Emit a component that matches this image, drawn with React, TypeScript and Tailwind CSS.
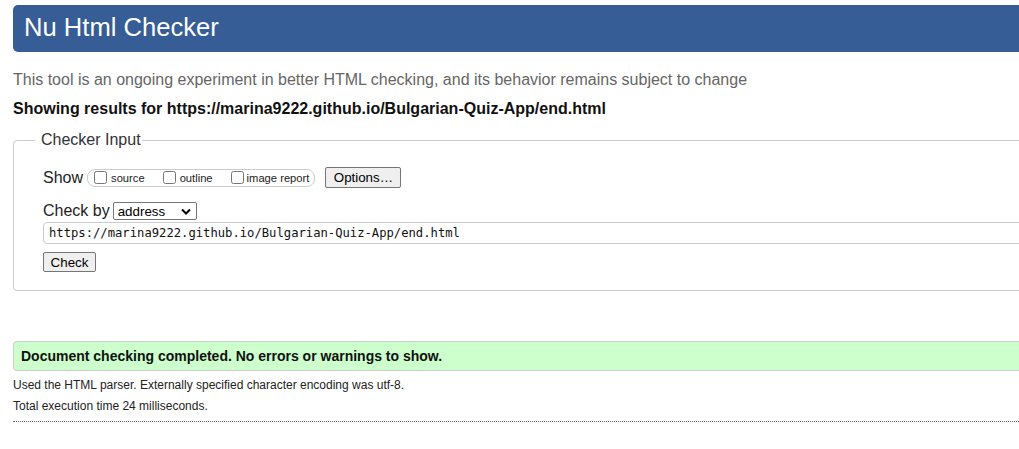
export default function App() {
  return (
    <div className="w-full overflow-hidden bg-white font-['Liberation_Sans',Arial,sans-serif] text-[#222]">
      <div className="ml-[13px] w-[1040px] pb-[28px]">
        <h1 className="mt-[5px] h-[47px] rounded-l-[5px] bg-[#365d95] pl-[11px] pt-[8px] text-[25.6px] font-normal leading-[29px] text-white">
          Nu Html Checker
        </h1>
        <p className="mt-[19px] text-[16px] leading-[18px] text-[#666]">
          This tool is an ongoing experiment in better HTML checking, and its behavior remains subject to change
        </p>
        <p className="mt-[11px] text-[16px] font-bold leading-[18px] text-[#111]">
          Showing results for https://marina9222.github.io/Bulgarian-Quiz-App/end.html
        </p>
        <fieldset className="mt-[13px] rounded-l-[4px] border border-[#ccc] pb-[18px] pl-[21px]">
          <legend className="pl-[6px] pr-[1px] text-[16px] leading-[18px] text-[#333]">Checker Input</legend>
          <div className="pl-[8px]">
            <div className="mt-[18px] flex h-[21px] items-center">
              <span className="text-[16px] leading-[18px]">Show</span>
              <div className="ml-[4px] flex h-[18px] items-center rounded-[8px] border border-[#ccc] pl-[6px] pr-[5px] text-[11.2px] leading-[13px]">
                <label className="flex items-center">
                  <input type="checkbox" className="m-0 h-[13px] w-[13px]" />
                  <span className="ml-[4px] mt-[2px]">source</span>
                </label>
                <label className="ml-[18px] flex items-center">
                  <input type="checkbox" className="m-0 h-[13px] w-[13px]" />
                  <span className="ml-[4px] mt-[2px]">outline</span>
                </label>
                <label className="ml-[18px] flex items-center">
                  <input type="checkbox" className="m-0 h-[13px] w-[13px]" />
                  <span className="ml-[3px] mt-[2px]">image report</span>
                </label>
              </div>
              <button className="ml-[10px] flex h-[21px] w-[76px] items-center justify-center rounded-[2px] border border-[#767676] bg-[#efefef] text-[13.33px] leading-[15px] text-black">
                Options…
              </button>
            </div>
            <div className="mt-[14px] flex h-[18px] items-center">
              <span className="text-[16px] leading-[18px]">Check by</span>
              <div className="ml-[3px] flex h-[18px] w-[84px] items-center justify-between rounded-[2px] border border-[#767676] pl-[4px] pr-[5px] text-[13.33px] leading-[15px] text-black">
                <span>address</span>
                <svg width="10" height="7" viewBox="0 0 10 7" aria-hidden="true">
                  <path d="M1 1.5 L5 5.5 L9 1.5" fill="none" stroke="#000" strokeWidth="2" />
                </svg>
              </div>
            </div>
            <input
              readOnly
              defaultValue="https://marina9222.github.io/Bulgarian-Quiz-App/end.html"
              className="mt-[2px] block h-[22px] w-full rounded-l-[4px] border border-[#ccc] pl-[5px] font-['DejaVu_Sans_Mono',monospace] text-[12.2px] text-[#111] outline-none"
            />
            <button className="mt-[8px] flex h-[20px] w-[53px] items-center justify-center rounded-[2px] border border-[#767676] bg-[#efefef] text-[13.33px] leading-[15px] text-black">
              Check
            </button>
          </div>
        </fieldset>
        <div className="mt-[50px] flex h-[30px] items-center rounded-l-[4px] border border-[#ccc] bg-[#ccffcc] pl-[7px] text-[14px] font-bold leading-[16px] text-[#111]">
          Document checking completed. No errors or warnings to show.
        </div>
        <p className="mt-[7px] text-[12px] leading-[14px] text-[#222]">
          Used the HTML parser. Externally specified character encoding was utf-8.
        </p>
        <p className="mt-[7px] text-[12px] leading-[14px] text-[#222]">Total execution time 24 milliseconds.</p>
        <div className="mt-[8px] border-t border-dotted border-[#666]" />
      </div>
    </div>
  );
}
